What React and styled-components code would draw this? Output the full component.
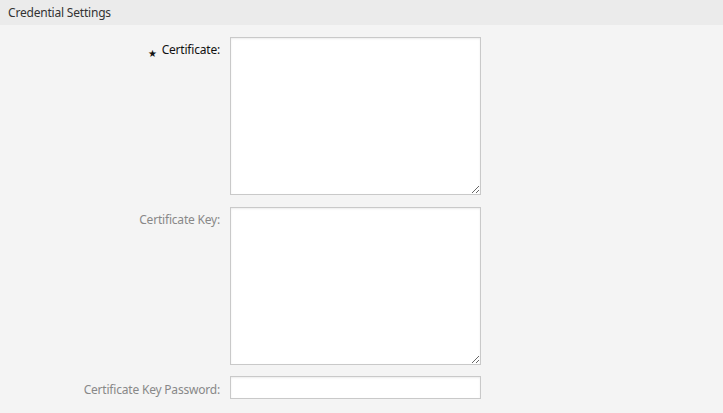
import React from "react";
import styled, { createGlobalStyle } from "styled-components";

const Global = createGlobalStyle`
  html, body { margin: 0; padding: 0; background: #f4f4f4; }
  body { font-family: "Noto Sans", "Liberation Sans", sans-serif; }
  * { box-sizing: border-box; }
`;

const Panel = styled.section`
  width: 723px;
  height: 413px;
  background: #f4f4f4;
  overflow: hidden;
`;

const Header = styled.header`
  height: 25px;
  background: #ebebeb;
  display: flex;
  align-items: center;
  padding: 0 8px;
  font-size: 12px;
  letter-spacing: -0.2px;
  color: #333;
`;

const Form = styled.div`
  display: grid;
  grid-template-columns: 220px 251px;
  column-gap: 10px;
  row-gap: 12px;
  padding-top: 12px;
`;

const Label = styled.label`
  font-size: 12px;
  letter-spacing: -0.2px;
  text-align: right;
  padding-top: 4px;
  color: ${(p) => (p.$required ? "#111" : "#888")};
  white-space: nowrap;
`;

const Star = styled.span`
  font-size: 10px;
  margin-right: 5px;
  position: relative;
  top: 3px;
`;

const TextArea = styled.textarea`
  width: 251px;
  height: 158px;
  margin: 0;
  border: 1px solid #c9c9c9;
  background: #fff;
  box-shadow: inset 0 1px 2px rgba(0, 0, 0, 0.08);
  resize: vertical;
  display: block;
`;

const Input = styled.input`
  width: 251px;
  height: 23px;
  margin: 0;
  margin-top: -1px;
  border: 1px solid #c9c9c9;
  background: #fff;
  box-shadow: inset 0 1px 2px rgba(0, 0, 0, 0.08);
  display: block;
`;

export default function App() {
  return (
    <>
      <Global />
      <Panel>
        <Header>Credential Settings</Header>
        <Form>
          <Label $required>
            <Star>★</Star>Certificate:
          </Label>
          <TextArea />
          <Label>Certificate Key:</Label>
          <TextArea />
          <Label>Certificate Key Password:</Label>
          <Input type="password" />
        </Form>
      </Panel>
    </>
  );
}
